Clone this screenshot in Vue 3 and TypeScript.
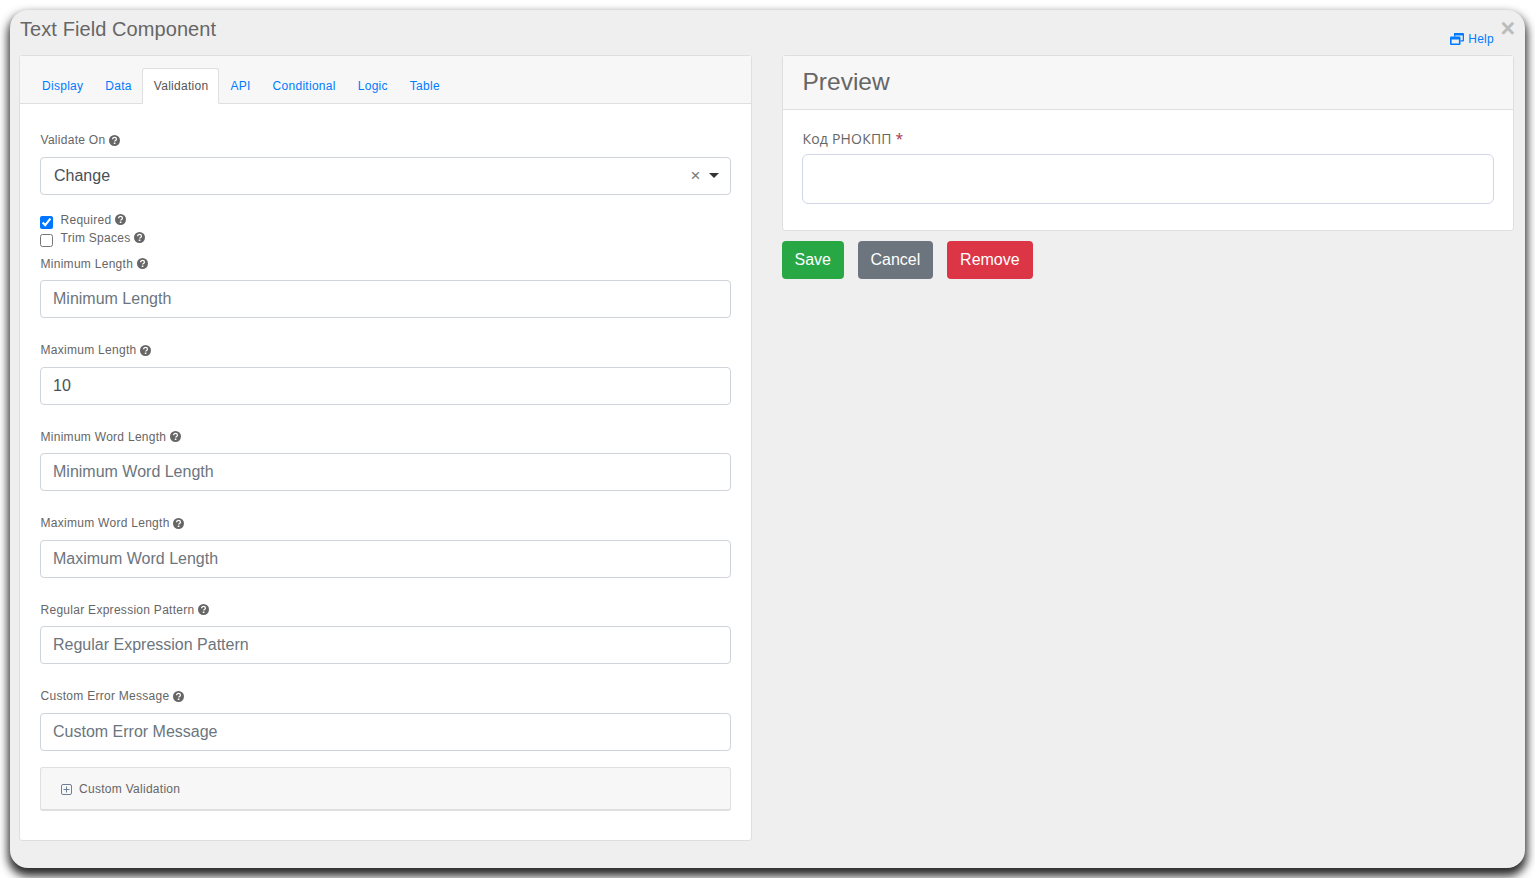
<template>
	<div class="page">
		<div class="dialog">
			<button class="close-button" type="button">×</button>
			<div class="dialog-header">
				<h4 class="dialog-title">Text Field Component</h4>
				<a class="help-link">
					<svg class="help-icon" viewBox="0 0 14 12" width="14" height="12">
						<path d="M4 0h9a1 1 0 0 1 1 1v6.5a1 1 0 0 1-1 1h-2.5V7.2h2.2V2.4H5.3v1.2H4z" fill="#007bff" />
						<path d="M1 3.5h8.5a1 1 0 0 1 1 1V11a1 1 0 0 1-1 1H1a1 1 0 0 1-1-1V4.500a1 1 0 0 1 1-1zM1.600 6.500v3.900h7.300V6.500z" fill="#007bff" />
					</svg>
					Help
				</a>
			</div>
			<div class="dialog-grid">
				<div class="card">
					<ul class="tabs">
						<li v-for="tab in tabs" :key="tab" class="tab" :class="tab === 'Validation' ? 'is-active' : ''">{{ tab }}</li>
					</ul>
					<div class="card-body">
						<label class="field-label">
							Validate On
							<svg class="hint" viewBox="0 0 12 12" width="11" height="11">
								<circle cx="6" cy="6" r="6" fill="#666" />
								<path d="M3.9 4.6c0-1.2 1-1.9 2.1-1.9s2.1.7 2.1 1.8c0 1.500-1.900 1.400-1.900 2.700" fill="none" stroke="#fff" stroke-width="1.4" />
								<rect x="5.2" y="8.2" width="1.8" height="1.6" fill="#fff" />
							</svg>
						</label>
						<div class="select">
							<span>Change</span>
							<span class="select-clear">×</span>
							<span class="select-caret"></span>
						</div>
						<div class="checks">
							<label v-for="check in checks" :key="check.label" class="check">
								<input type="checkbox" :checked="check.checked" />
								<span>{{ check.label }}</span>
								<svg class="hint" viewBox="0 0 12 12" width="11" height="11">
									<circle cx="6" cy="6" r="6" fill="#666" />
									<path d="M3.9 4.6c0-1.2 1-1.9 2.1-1.9s2.1.7 2.1 1.8c0 1.500-1.900 1.400-1.900 2.700" fill="none" stroke="#fff" stroke-width="1.4" />
									<rect x="5.2" y="8.2" width="1.8" height="1.6" fill="#fff" />
								</svg>
							</label>
						</div>
						<div v-for="field in fields" :key="field.label" class="field">
							<label class="field-label">
								{{ field.label }}
								<svg class="hint" viewBox="0 0 12 12" width="11" height="11">
									<circle cx="6" cy="6" r="6" fill="#666" />
									<path d="M3.9 4.6c0-1.2 1-1.9 2.1-1.9s2.1.7 2.1 1.8c0 1.500-1.900 1.400-1.900 2.700" fill="none" stroke="#fff" stroke-width="1.4" />
									<rect x="5.2" y="8.2" width="1.8" height="1.6" fill="#fff" />
								</svg>
							</label>
							<input class="text-input" type="text" :placeholder="field.label" :value="field.value" />
						</div>
						<div class="collapse-panel">
							<svg class="plus-icon" viewBox="0 0 11 11" width="11" height="11">
								<rect x="0.5" y="0.5" width="10" height="10" rx="1.5" fill="none" stroke="#6f8196" />
								<path d="M2.5 5.5h6M5.5 2.500v6" stroke="#6f8196" />
							</svg>
							Custom Validation
						</div>
					</div>
				</div>
				<div class="preview-column">
					<div class="card">
						<div class="preview-header">
							<h3 class="preview-title">Preview</h3>
						</div>
						<div class="preview-body">
							<label class="preview-label">Код РНОКПП <span class="required">*</span></label>
							<input class="preview-input" type="text" />
						</div>
					</div>
					<div class="actions">
						<button class="action-button save" type="button">Save</button>
						<button class="action-button cancel" type="button">Cancel</button>
						<button class="action-button remove" type="button">Remove</button>
					</div>
				</div>
			</div>
		</div>
	</div>
</template>

<script setup lang="ts">
interface Field {
	label: string;
	value: string;
}

const tabs: string[] = ["Display", "Data", "Validation", "API", "Conditional", "Logic", "Table"];

const checks = [
	{label: "Required", checked: true},
	{label: "Trim Spaces", checked: false}
];

const fields: Field[] = [
	{label: "Minimum Length", value: ""},
	{label: "Maximum Length", value: "10"},
	{label: "Minimum Word Length", value: ""},
	{label: "Maximum Word Length", value: ""},
	{label: "Regular Expression Pattern", value: ""},
	{label: "Custom Error Message", value: ""}
];
</script>

<style>
html,
body {
	margin: 0;
	background: #fff;
	overflow: hidden;
}
</style>

<style scoped>
.page {
	padding: 10px;
	box-sizing: border-box;
	height: 878px;
	font-family: "Liberation Sans", Arial, sans-serif;
	color: #555;
}

.dialog {
	position: relative;
	box-sizing: border-box;
	height: 858px;
	padding: 0 11px 0 9px;
	background: #efefef;
	border-radius: 18px;
	box-shadow: 0 6px 10px 2px #2a2a2a;
}

.close-button {
	position: absolute;
	top: 5px;
	right: 10px;
	padding: 0;
	border: none;
	background: none;
	font-family: "Liberation Sans", Arial, sans-serif;
	font-size: 25px;
	font-weight: 700;
	line-height: 27px;
	color: #bcbcbc;
}

.dialog-header {
	display: flex;
	justify-content: space-between;
	height: 45px;
}

.dialog-title {
	margin: 7px 0 0 1px;
	font-size: 20px;
	font-weight: 400;
	line-height: 24px;
	letter-spacing: 0.08px;
	color: #666;
}

.help-link {
	display: flex;
	align-items: center;
	gap: 4px;
	height: 14px;
	margin: 22px 20px 0 0;
	font-size: 12px;
	letter-spacing: 0.28px;
	color: #007bff;
}

.dialog-grid {
	display: grid;
	grid-template-columns: 1fr 1fr;
	gap: 30px;
	align-items: start;
}

.card {
	box-sizing: border-box;
	background: #fff;
	border: 1px solid #dfdfdf;
	border-radius: 3px;
}

.tabs {
	display: flex;
	margin: 0;
	padding: 12px 11px 0;
	height: 48px;
	box-sizing: border-box;
	list-style: none;
	background: #f7f7f7;
	border-bottom: 1px solid #dfdfdf;
}

.tab {
	box-sizing: border-box;
	height: 36px;
	padding: 0 10px;
	font-size: 12px;
	line-height: 35px;
	letter-spacing: 0.28px;
	color: #007bff;
	border: 1px solid transparent;
	border-radius: 3px 3px 0 0;
}

.tab.is-active {
	margin-left: -1px;
	padding-left: 11px;
	color: #555;
	background: #fff;
	border-color: #dfdfdf #dfdfdf #fff;
}

.card-body {
	padding: 20px 20px 29px;
}

.field-label {
	display: flex;
	align-items: center;
	gap: 3.5px;
	height: 18px;
	padding: 7px 0 7.5px 0.5px;
	font-size: 12px;
	letter-spacing: 0.28px;
	color: #666;
}

.hint {
	flex: none;
}

.select {
	display: flex;
	align-items: center;
	box-sizing: border-box;
	height: 38px;
	margin-bottom: 16px;
	padding: 0 12px 0 13px;
	font-size: 16px;
	color: #495057;
	border: 1px solid #ced4da;
	border-radius: 4px;
}

.select-clear {
	margin-left: auto;
	font-size: 17px;
	color: #777;
}

.select-caret {
	width: 0;
	height: 0;
	margin: 0 -1px 0 8px;
	border-style: solid;
	border-width: 5px 5px 0;
	border-color: #333 transparent transparent;
}

.checks {
	margin-bottom: 1px;
}

.check {
	display: flex;
	align-items: center;
	gap: 4px;
	height: 18px;
	font-size: 12px;
	letter-spacing: 0.28px;
	color: #666;
}

.check input {
	margin: 5px 3.5px 0 0;
	width: 13px;
	height: 13px;
}

.field {
	margin-bottom: 16px;
}

.text-input {
	display: block;
	box-sizing: border-box;
	width: 100%;
	height: 38px;
	padding: 6px 12px;
	font-family: inherit;
	font-size: 16px;
	color: #495057;
	background: #fff;
	border: 1px solid #ced4da;
	border-radius: 4px;
}

.text-input::placeholder {
	color: #6c757d;
	opacity: 1;
}

.collapse-panel {
	display: flex;
	align-items: center;
	gap: 7px;
	box-sizing: border-box;
	height: 44px;
	padding: 2px 0 0 20px;
	font-size: 12px;
	letter-spacing: 0.28px;
	color: #666;
	background: #f7f7f7;
	border: 1px solid #dfdfdf;
	border-bottom-width: 2px;
	border-radius: 3px;
}

.preview-header {
	display: flex;
	align-items: center;
	box-sizing: border-box;
	height: 54px;
	padding: 0 20px 2px;
	background: #f7f7f7;
	border-bottom: 1px solid #dfdfdf;
}

.preview-title {
	margin: 0;
	font-size: 24.5px;
	font-weight: 400;
	color: #666;
}

.preview-body {
	padding: 20px 20px 26px;
}

.preview-label {
	display: block;
	height: 24px;
	font-family: "Open Sans", sans-serif;
	font-size: 14px;
	line-height: 18px;
	letter-spacing: 0.2px;
	color: #666;
}

.required {
	color: #a8324a;
}

.preview-input {
	display: block;
	box-sizing: border-box;
	width: calc(100% + 2px);
	height: 50px;
	margin-left: -1px;
	background: #fff;
	border: 1px solid #d3d6e8;
	border-radius: 6px;
}

.actions {
	display: flex;
	gap: 14px;
	margin-top: 10px;
}

.action-button {
	box-sizing: border-box;
	height: 38px;
	padding: 0 12px;
	font-family: inherit;
	font-size: 16px;
	color: #fff;
	border: 1px solid transparent;
	border-radius: 4px;
}

.save {
	background: #28a745;
}

.cancel {
	padding: 0 11.5px;
	background: #6c757d;
}

.remove {
	padding: 0 12.3px;
	background: #dc3545;
}
</style>
